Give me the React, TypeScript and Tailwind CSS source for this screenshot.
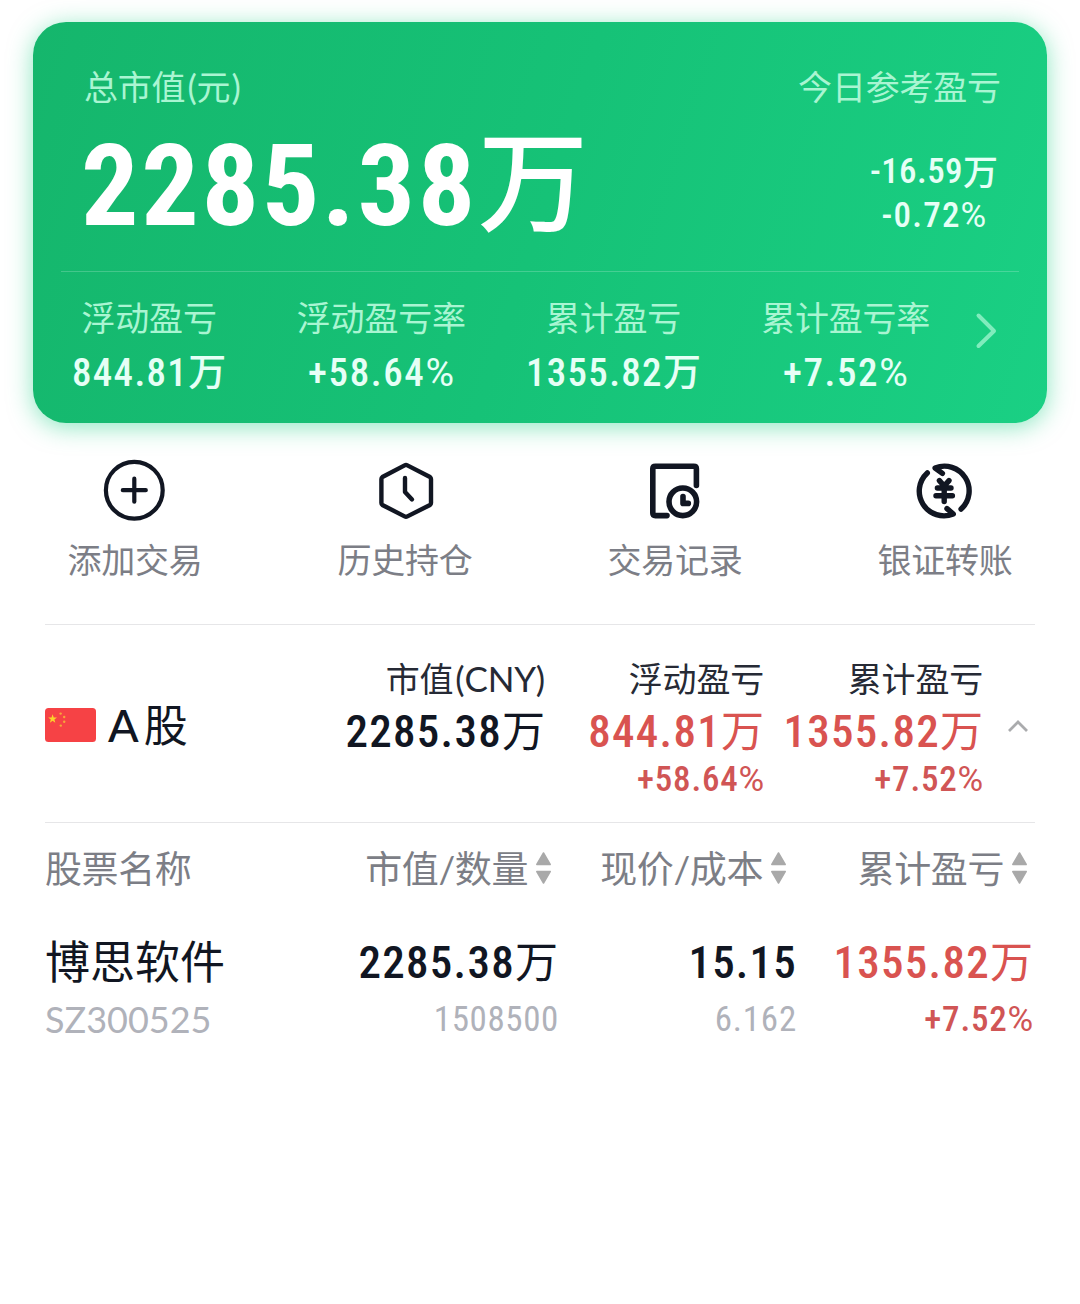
import React from "react";
import clsx from "clsx";

const NUM = "font-['Roboto','Noto_Sans_CJK_SC',sans-serif] [font-stretch:86%]";

// Figures are set in a narrow face, the 万 unit in the CJK one, the percent sign wider and lighter.
function Num({ value, unit, className, unitClass }: { value: string; unit?: string; className?: string; unitClass?: string }) {
  const isPct = value.endsWith("%");
  return (
    <div className={clsx(NUM, "flex items-center whitespace-nowrap", className)}>
      <span className={clsx(!unit && "-mr-[1px]")}>
        {isPct ? value.slice(0, -1) : value}
        {isPct && <span className="font-normal [font-stretch:100%]">%</span>}
      </span>
      {unit && <span className={clsx("font-['Noto_Sans_CJK_SC',sans-serif] tracking-normal", unitClass)}>{unit}</span>}
    </div>
  );
}

function SortArrows() {
  return (
    <svg className="-mt-[1px] shrink-0" width="16" height="32" viewBox="0 0 16 32" fill="#a9a9a9" stroke="#a9a9a9" strokeWidth="1.5" strokeLinejoin="round">
      <path d="M7.5 1 L14.2 12.5 H0.8 Z" />
      <path d="M7.5 31 L14.2 19.5 H0.8 Z" />
    </svg>
  );
}

function AddIcon() {
  return (
    <svg width="64" height="64" viewBox="0 0 64 64" fill="none" stroke="#111622" strokeWidth="4.2" strokeLinecap="round">
      <circle cx="31.3" cy="32.2" r="28.4" />
      <path d="M31.3 20.7 V43.7 M19.8 32.2 H42.8" />
    </svg>
  );
}

function HistoryIcon() {
  return (
    <svg width="64" height="64" viewBox="0 0 64 64" fill="none" stroke="#111622" strokeWidth="4.4" strokeLinecap="round" strokeLinejoin="round">
      <path d="M31.6 7.4 Q33 6.7 34.4 7.4 L57 19 Q58 19.7 58 21 V45 Q58 46.3 57 47 L34.4 58.4 Q33 59.1 31.6 58.4 L9.4 47 Q8.4 46.3 8.4 45 V21 Q8.4 19.7 9.4 19 Z" />
      <path d="M32 20 V34 L39 41.5" />
    </svg>
  );
}

function RecordIcon() {
  return (
    <svg width="64" height="64" viewBox="0 0 64 64" fill="none" stroke="#111622" strokeWidth="5.6" strokeLinecap="round" strokeLinejoin="round">
      <path d="M24 57.6 H12.4 Q9.8 57.6 9.8 55 V10.8 Q9.8 8.2 12.4 8.2 H50.8 Q53.4 8.2 53.4 10.8 V27.5" />
      <circle cx="39.8" cy="43.8" r="13.8" />
      <path d="M40 38.5 V45.4 H45.3" />
    </svg>
  );
}

function TransferIcon() {
  return (
    <svg width="64" height="64" viewBox="0 0 64 64" fill="none" stroke="#111622" strokeWidth="5.4" strokeLinecap="round" strokeLinejoin="round">
      <path d="M14.3 14.9 A24.7 24.7 0 0 0 40.3 56 L34 50.6" />
      <path d="M48.1 51.1 A24.7 24.7 0 0 0 22.1 10 L29.4 15.4" />
      <path d="M26.4 22.6 L31.2 28 L36 22.6 M24.4 30 H38 M23 37.8 H39.4 M31.2 29 V43.5" />
    </svg>
  );
}

function Flag() {
  return (
    <svg width="51" height="34" viewBox="0 0 51 34">
      <rect width="51" height="34" rx="3.5" fill="#f64245" />
      <path fill="#fbd32b" d="M7.6 6.2 L8.7 9.4 L12 9.4 L9.4 11.4 L10.3 14.7 L7.6 12.8 L4.9 14.7 L5.8 11.4 L3.2 9.4 L6.5 9.4 Z" />
      <g fill="#f5a83a">
        <circle cx="15.6" cy="5.6" r="1.2" />
        <circle cx="19.2" cy="9" r="1.2" />
        <circle cx="19.2" cy="13.8" r="1.2" />
        <circle cx="15.8" cy="17.6" r="1.2" />
      </g>
    </svg>
  );
}

const stats = [
  { label: "浮动盈亏", value: "844.81", unit: "万" },
  { label: "浮动盈亏率", value: "+58.64%" },
  { label: "累计盈亏", value: "1355.82", unit: "万" },
  { label: "累计盈亏率", value: "+7.52%" },
];

const actions = [
  { label: "添加交易", icon: <AddIcon /> },
  { label: "历史持仓", icon: <HistoryIcon /> },
  { label: "交易记录", icon: <RecordIcon /> },
  { label: "银证转账", icon: <TransferIcon /> },
];

function SummaryCard() {
  return (
    <section className="mx-[33px] h-[401px] rounded-[33px] bg-linear-[108deg,#15b66c,#16c277_50%,#1ad084] shadow-[0_4px_24px_rgba(26,208,131,0.5)] text-white">
      <div className="flex h-[249px] justify-between pt-[45px] pl-[48px]">
        <div>
          <div className="h-[40px] pl-[3px] text-[34px] leading-[38px] tracking-[-0.2px] text-[#a9f5d2]">
            总市值<span className="pl-[2px] text-[35px]">(</span>元<span className="pl-[1px] text-[35px]">)</span>
          </div>
          <Num value="2285.38" unit="万" className="mt-[19px] h-[120px] text-[114px] leading-[120px] font-bold tracking-[2.6px]" unitClass="pb-[22px] text-[110px] font-medium" />
        </div>
        <div className="flex flex-col items-end">
          <div className="w-[295px] text-center text-[34px] leading-[40px] tracking-[-0.2px] text-[#a9f5d2]">今日参考盈亏</div>
          <div className="mt-[43px] flex w-[226px] flex-col items-center text-[35px] leading-[44px] font-medium text-[#e6fff6]">
            <Num value="-16.59" unit="万" className="h-[44px] tracking-[0.4px]" unitClass="pb-[5px] text-[35px]" />
            <Num value="-0.72%" className="h-[44px] tracking-[1.2px]" />
          </div>
        </div>
      </div>
      <div className="mx-7 h-px bg-white/20" />
      <div className="flex pt-[25px]">
        {stats.map((s) => (
          <div key={s.label} className="flex w-[232.2px] flex-col items-center">
            <div className="text-[34px] leading-[42px] tracking-[-0.2px] text-[#a9f5d2]">{s.label}</div>
            <Num
              value={s.value}
              unit={s.unit}
              className={clsx("mt-[10px] h-[48px] text-[39px] leading-[48px] font-medium text-[#e6fff6]", s.unit ? "tracking-[1.3px]" : "tracking-[1.6px]")}
              unitClass="pb-[8px] text-[38px]"
            />
          </div>
        ))}
        <svg className="mt-[15px] ml-[13px]" width="24" height="38" viewBox="0 0 24 38" fill="none" stroke="#80ecbd" strokeWidth="4" strokeLinecap="round" strokeLinejoin="round">
          <path d="M3.5 3.5 L19 19 L3.5 34" />
        </svg>
      </div>
    </section>
  );
}

function Actions() {
  return (
    <nav className="mt-[35px] grid h-[166px] grid-cols-4">
      {actions.map((a) => (
        <button key={a.label} className="flex flex-col items-center">
          {a.icon}
          <span className="mt-[18px] text-[34px] leading-[40px] tracking-[-0.2px] text-[#7c7e86]">{a.label}</span>
        </button>
      ))}
    </nav>
  );
}

function MarketCol({ label, value, pct, className, red }: { label: React.ReactNode; value: string; pct?: string; className: string; red?: boolean }) {
  return (
    <div className={clsx("flex flex-col items-end", className)}>
      <div className="h-[42px] text-[34px] leading-[42px] tracking-[-0.2px] text-[#262a35]">{label}</div>
      <Num value={value} unit="万" className={clsx("mt-[5px] h-[54px] text-[45px] leading-[54px] font-medium tracking-[1.3px]", red && "text-[#d95350]")} unitClass="pb-[9px] text-[43px] font-normal" />
      {pct && <Num value={pct} className="h-[42px] text-[35px] leading-[42px] font-medium tracking-[0.8px] text-[#d05555]" />}
    </div>
  );
}

export default function App() {
  return (
    <main className="h-[1304px] w-[1080px] overflow-hidden bg-white pt-[22px] font-['Lato','Noto_Sans_CJK_SC',sans-serif] text-[#111622]">
      <SummaryCard />
      <Actions />
      <div className="mx-[45px]">
        <div className="h-px bg-[#e6e6e8]" />
        <div className="flex h-[197px] pt-[33px]">
          <div className="mt-[44px] flex h-[46px] w-[200px] items-center">
            <Flag />
            <span className="ml-[12px] text-[45px] leading-[46px] font-medium">A</span>
            <span className="ml-[5px] text-[44px] leading-[46px]">股</span>
          </div>
          <MarketCol label={<>市值<span className="pl-[2px] text-[35px] leading-[36px]">(CNY)</span></>} value="2285.38" className="w-[300px]" />
          <MarketCol label="浮动盈亏" value="844.81" pct="+58.64%" className="w-[219px]" red />
          <MarketCol label="累计盈亏" value="1355.82" pct="+7.52%" className="w-[219px]" red />
          <svg className="mt-[61px] ml-[25px]" width="20" height="14" viewBox="0 0 20 14" fill="none" stroke="#aaabad" strokeWidth="2.8">
            <path d="M1 12 L10 3 L19 12" />
          </svg>
        </div>
        <div className="h-px bg-[#e6e6e8]" />

        <div className="flex h-[91px] items-center text-[37px] leading-[44px] tracking-[-0.4px] text-[#7c7e86]">
          <div className="w-[207px] pt-[1px]">股票名称</div>
          <div className="flex w-[300px] items-center justify-end gap-[8px]"><span className="pt-[1px]">市值/数量</span><SortArrows /></div>
          <div className="flex w-[235px] items-center justify-end gap-[8px]"><span className="pt-[1px]">现价/成本</span><SortArrows /></div>
          <div className="flex w-[241px] items-center justify-end gap-[8px]"><span className="pt-[1px]">累计盈亏</span><SortArrows /></div>
        </div>

        <div className="mt-[20px] flex">
          <div className="w-[213px]">
            <div className="text-[45px] leading-[56px]">博思软件</div>
            <div className="mt-[7px] text-[36px] leading-[44px] text-[#b0b2ba]">SZ300525</div>
          </div>
          <div className="flex w-[300px] flex-col items-end pt-[1px]">
            <Num value="2285.38" unit="万" className="h-[56px] text-[45px] leading-[56px] font-medium tracking-[1.3px]" unitClass="pb-[9px] text-[43px] font-normal" />
            <Num value="1508500" className="mt-[7px] h-[44px] text-[35px] leading-[44px] tracking-[0.6px] text-[#b0b2ba]" />
          </div>
          <div className="flex w-[238px] flex-col items-end pt-[1px]">
            <Num value="15.15" className="h-[56px] text-[45px] leading-[56px] font-medium tracking-[1.2px]" />
            <Num value="6.162" className="mt-[7px] h-[44px] text-[35px] leading-[44px] tracking-[0.8px] text-[#b0b2ba]" />
          </div>
          <div className="flex w-[237px] flex-col items-end pt-[1px] text-[#d95350]">
            <Num value="1355.82" unit="万" className="h-[56px] text-[45px] leading-[56px] font-medium tracking-[1.3px]" unitClass="pb-[9px] text-[43px] font-normal" />
            <Num value="+7.52%" className="mt-[7px] h-[44px] text-[35px] leading-[44px] font-medium tracking-[0.8px] text-[#d05555]" />
          </div>
        </div>
      </div>
    </main>
  );
}
